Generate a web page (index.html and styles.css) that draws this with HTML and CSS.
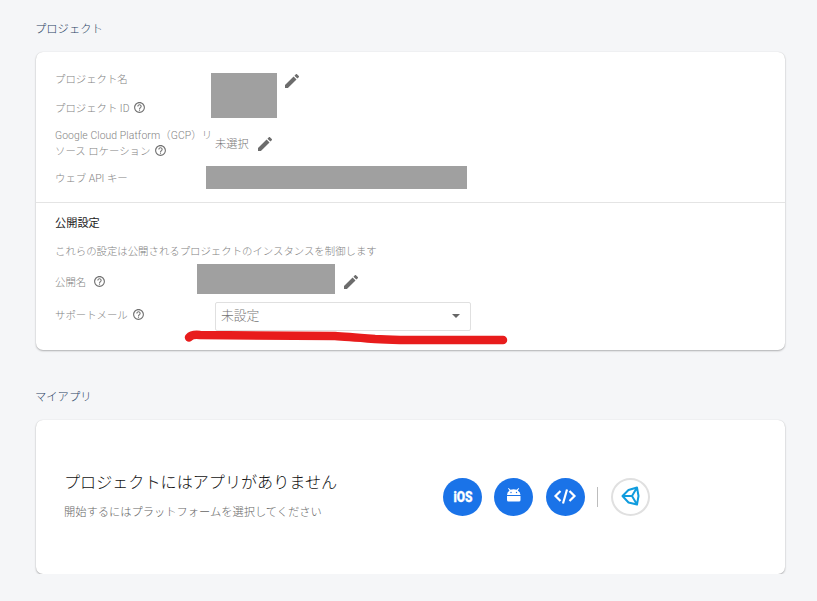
FILE: index.html
```html
<!DOCTYPE html>
<html lang="ja">
<head>
<meta charset="utf-8">
<title>プロジェクト</title>
<link rel="stylesheet" href="styles.css">
</head>
<body>
<svg width="0" height="0" class="defs">
  <symbol id="help" viewBox="0 0 24 24"><path d="M11 18h2v-2h-2v2zm1-16C6.48 2 2 6.48 2 12s4.480 10 10 10 10-4.480 10-10S17.520 2 12 2zm0 18c-4.410 0-8-3.590-8-8s3.590-8 8-8 8 3.590 8 8-3.590 8-8 8zm0-14c-2.210 0-4 1.790-4 4h2c0-1.100.9-2 2-2s2 .9 2 2c0 2-3 1.750-3 5h2c0-2.250 3-2.500 3-5 0-2.210-1.790-4-4-4z"/></symbol>
  <symbol id="pencil" viewBox="3 3 18 18"><path d="M3 17.250V21h3.750L17.810 9.940l-3.750-3.750L3 17.250zM20.710 7.040c.39-.39.39-1.020 0-1.410l-2.340-2.340c-.39-.39-1.020-.39-1.410 0l-1.830 1.830 3.750 3.750 1.830-1.830z"/></symbol>
</svg>
<main>
  <h2>プロジェクト</h2>
  <div class="card project">
    <section class="fields general">
      <div class="label">プロジェクト名</div>
      <div class="value names"><span class="mask mask-name"></span><svg class="edit"><use href="#pencil"/></svg></div>
      <div class="label">プロジェクト ID<svg class="help"><use href="#help"/></svg></div>
      <div class="label wrap"><span class="line latin">Google Cloud Platform（GCP）リ</span><span class="line">ソース ロケーション<svg class="help"><use href="#help"/></svg></span></div>
      <div class="value location">未選択<svg class="edit"><use href="#pencil"/></svg></div>
      <div class="label">ウェブ API キー</div>
      <div class="value"><span class="mask mask-key"></span></div>
    </section>
    <section class="public">
      <h3>公開設定</h3>
      <p>これらの設定は公開されるプロジェクトのインスタンスを制御します</p>
      <div class="fields">
        <div class="label">公開名<svg class="help spaced"><use href="#help"/></svg></div>
        <div class="value"><span class="mask mask-public"></span><svg class="edit edit-public"><use href="#pencil"/></svg></div>
        <div class="label">サポートメール<svg class="help"><use href="#help"/></svg></div>
        <div class="value select-cell"><div class="select"><span>未設定</span><i class="caret"></i></div></div>
      </div>
    </section>
    <svg class="marker" viewBox="0 0 330 24"><path d="M9 12.500Q12 9 20 10L155 11Q164 11.500 195 14Q205 14.500 220 15H323" /></svg>
  </div>
  <h2 class="apps-title">マイアプリ</h2>
  <div class="card apps">
    <div class="intro">
      <h1>プロジェクトにはアプリがありません</h1>
      <p>開始するにはプラットフォームを選択してください</p>
    </div>
    <div class="platforms">
      <div class="round"><span class="ios">iOS</span></div>
      <div class="round"><svg width="39" height="38" viewBox="0 0 39 38"><path fill="#fff" d="M13 17q0-3 2.500-4.500L14 10.500l.6-.6 1.900 1.900q3-1.200 6.200 0l1.900-1.900.6.6-1.500 2Q26.500 14 26.500 17zM13 18h13.500v4q0 1.500-1.500 1.500H14.500q-1.500 0-1.500-1.500z"/><circle cx="17" cy="14.500" r=".7" fill="#1a73e8"/><circle cx="22.500" cy="14.500" r=".7" fill="#1a73e8"/></svg></div>
      <div class="round"><svg width="38" height="38" viewBox="0 0 38 38"><path fill="none" stroke="#fff" stroke-width="2.200" d="M14.500 13L9.500 18l5 5M23.500 13l5 5-5 5M21 11.500l-4 14"/></svg></div>
      <span class="rule"></span>
      <div class="round unity"><svg width="35" height="34" viewBox="0 0 35 34"><path fill="none" stroke="#109cde" stroke-width="2" stroke-linejoin="round" d="M9.500 16L15.500 10 24 7.500 25.500 16 24 24.500 15.500 22.500ZM9.500 16H19L24 7.500M19 16L24 24.500"/></svg></div>
    </div>
  </div>
</main>
</body>
</html>
```
FILE: styles.css
```css
* { box-sizing: border-box; }
body {
  margin: 0;
  background: #f5f6f8;
  color: #757575;
  font-family: Roboto, "Noto Sans CJK JP", sans-serif;
  font-weight: 300;
  font-size: 10.4px;
}
h1, h2, h3, p { margin: 0; font-weight: 300; }
.defs { position: absolute; }
main { width: 749px; margin-left: 36px; padding-top: 19px; }
h2 { height: 22px; line-height: 22px; margin-left: -1px; font-size: 11.300px; color: #2c4364; }
.card {
  background: #fff;
  border-radius: 7px;
  box-shadow: 0 1px 2px rgba(0, 0, 0, .28), 0 0 1px rgba(0, 0, 0, .15);
}
.project { position: relative; height: 298px; margin-top: 11px; }
.fields { display: grid; grid-template-columns: 159px 1fr; padding-left: 19px; }
.general {
  grid-template-rows: 29px 29px 40px 30px;
  height: 151px;
  padding-top: 12px;
  border-bottom: 1px solid #e4e4e4;
}
.label, .value { display: flex; align-items: center; white-space: nowrap; }
.label { color: #828282; }
.wrap { flex-direction: column; align-items: flex-start; justify-content: center; }
.line { display: flex; align-items: center; height: 16px; }
.latin { letter-spacing: .09px; }
.help { width: 13px; height: 13px; margin-left: 4px; fill: #707070; }
.help.spaced { margin-left: 7px; }
.edit { width: 14px; height: 14px; margin-left: 9px; fill: #6c6c6c; }
.names { grid-row: 1 / 3; grid-column: 2; align-items: flex-start; padding-top: 9px; }
.names .edit { margin-left: 8px; margin-top: 1px; }
.location { font-size: 11.2px; padding: 2px 0 0 1px; }
.location .edit { margin-top: 2px; }
.mask { background: #a0a0a0; }
.mask-name { width: 66px; height: 45px; margin-left: -3px; }
.mask-key { width: 261px; height: 23px; margin-left: -8px; }
.mask-public { width: 138px; height: 30px; margin: -5px 0 0 -17px; }
.public { padding-top: 9px; }
h3 { height: 23px; line-height: 23px; padding-left: 19px; font-size: 11.2px; color: #212121; font-weight: 400; }
.public p { height: 31px; line-height: 33px; padding-left: 19px; color: #828282; }
.public .fields { grid-template-rows: 30px 36px; }
.edit-public { margin-top: 2px; }
.select-cell { padding: 4px 0 0 1px; }
.select {
  display: flex;
  align-items: center;
  justify-content: space-between;
  width: 256px;
  height: 29px;
  padding: 0 10px 0 5px;
  border: 1px solid #e0e0e0;
  border-radius: 2px;
  font-size: 12.8px;
  color: #757575;
}
.select span { padding-bottom: 3px; }
.caret { border: 4px solid transparent; border-top-color: #666; border-bottom: 0; }
.marker { position: absolute; left: 144px; top: 273px; width: 330px; height: 24px; }
.marker path { fill: none; stroke: #e81c1c; stroke-width: 8.500px; stroke-linecap: round; stroke-linejoin: round; }
.apps-title { margin-top: 37px; }
.apps { display: flex; height: 154px; margin-top: 11px; padding-left: 28px; }
.intro { width: 379px; padding-top: 49px; }
h1 { height: 28px; line-height: 28px; font-size: 16.100px; color: #111; }
.intro p { height: 32px; line-height: 32px; font-size: 11.250px; color: #666; }
.platforms { display: flex; align-items: center; height: 38px; margin-top: 58px; }
.round {
  display: flex;
  align-items: center;
  justify-content: center;
  width: 39px;
  height: 38px;
  margin-right: 12.300px;
  border-radius: 50%;
  background: #1a73e8;
}
.ios { color: #fff; font-weight: 900; font-size: 15px; transform: scaleX(.8); line-height: 14px; padding-bottom: 1px; -webkit-text-stroke: .3px #fff; }
.rule { width: 1px; height: 20px; background: #bdbdbd; margin-right: 13px; }
.unity { background: #fff; border: 2px solid #e0e0e0; margin: 0; }
```
